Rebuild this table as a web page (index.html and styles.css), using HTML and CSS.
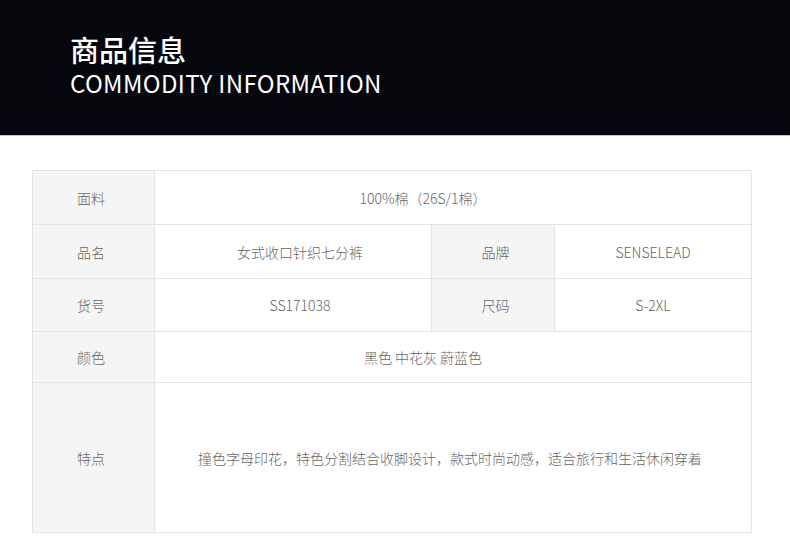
FILE: index.html
```html
<!DOCTYPE html>
<html lang="zh-CN">
<head>
<meta charset="utf-8">
<link rel="stylesheet" href="styles.css">
</head>
<body>
<header class="hero">
  <h1 class="hero-cn">商品信息</h1>
  <div class="hero-en">COMMODITY INFORMATION</div>
</header>
<main class="content">
  <div class="spec">
    <div class="cell label">面料</div>
    <div class="cell value span3 shift-left">100%棉（26S/1棉）</div>

    <div class="cell label">品名</div>
    <div class="cell value col2">女式收口针织七分裤</div>
    <div class="cell label label-b">品牌</div>
    <div class="cell value">SENSELEAD</div>

    <div class="cell label">货号</div>
    <div class="cell value col2">SS171038</div>
    <div class="cell label label-b">尺码</div>
    <div class="cell value">S-2XL</div>

    <div class="cell label">颜色</div>
    <div class="cell value span3 shift-left">黑色 中花灰 蔚蓝色</div>

    <div class="cell label">特点</div>
    <div class="cell value span3 feature">撞色字母印花，特色分割结合收脚设计，款式时尚动感，适合旅行和生活休闲穿着</div>
  </div>
</main>
</body>
</html>
```

FILE: styles.css
```css
* { box-sizing: border-box; }
html, body { margin: 0; padding: 0; background: #fff; }
body {
  font-family: "Noto Sans CJK SC", sans-serif;
  width: 790px;
  height: 546px;
  overflow: hidden;
}
.hero {
  height: 136px;
  background: #05070c;
  border-bottom: 1px solid #c8c8c8;
  padding: 30px 0 0 70px;
  color: #fff;
}
.hero-cn {
  margin: 0;
  font-family: "Noto Sans CJK SC", sans-serif;
  font-weight: 500;
  font-size: 29px;
  line-height: 38px;
}
.hero-en {
  font-family: "Noto Sans CJK SC", sans-serif;
  font-weight: 400;
  font-size: 24px;
  line-height: 30px;
  letter-spacing: 0.35px;
}
.content {
  padding: 34px 0 0 32px;
}
.spec {
  width: 719px;
  display: grid;
  grid-template-columns: 122px 277px 123px 197px;
  grid-template-rows: 54px 54px 53px 51px 150px;
  border-top: 1px solid #e4e4e4;
  border-left: 1px solid #e4e4e4;
}
.cell {
  display: flex;
  align-items: center;
  justify-content: center;
  border-right: 1px solid #e4e4e4;
  border-bottom: 1px solid #e4e4e4;
  font-family: "Noto Sans CJK SC", sans-serif;
  font-size: 14px;
  color: #666;
  font-weight: 300;
}
.label { background: #f5f5f5; padding-right: 5px; }
.label-b { padding-right: 0; padding-left: 5px; }
.value { background: #fff; }
.col2 { padding-left: 14px; }
.span3 { grid-column: span 3; }
.shift-left { padding-right: 60px; }
.feature { padding-right: 6px; }
```
